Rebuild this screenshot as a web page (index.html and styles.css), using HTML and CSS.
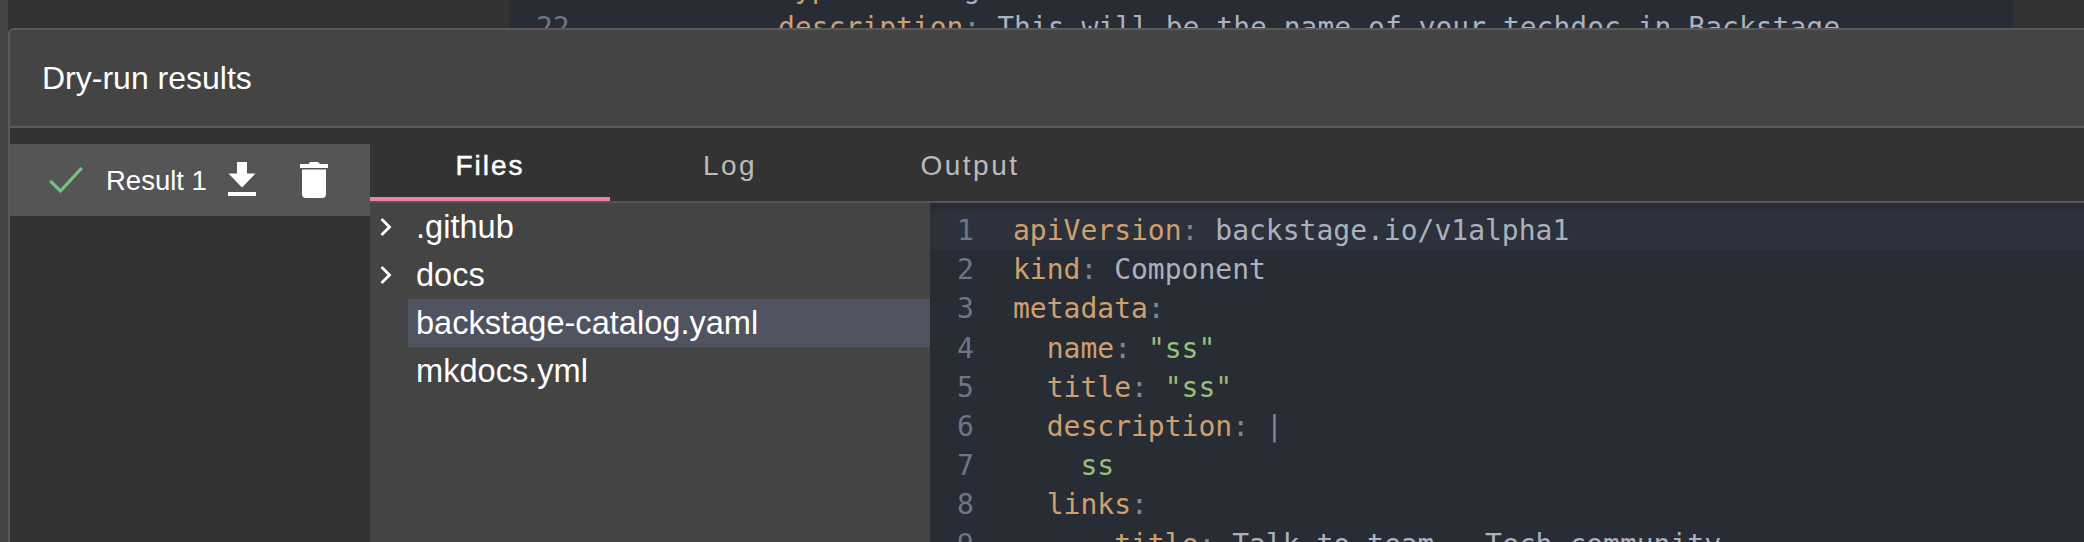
FILE: index.html
```html
<!DOCTYPE html>
<html lang="en">
<head>
<meta charset="utf-8">
<title>Dry-run results</title>
<link rel="stylesheet" href="styles.css">
</head>
<body>
<div class="backdrop">
  <div class="bg-code">
    <div class="cl"><span class="ln bg-ln">21</span><span class="ind8"></span><span class="k">type</span><span class="p">:</span> <span class="v">string</span></div>
    <div class="cl"><span class="ln bg-ln">22</span><span class="ind8"></span><span class="k">description</span><span class="p">:</span> <span class="v">This will be the name of your techdoc in Backstage</span></div>
  </div>
</div>
<section class="dialog">
  <header class="dialog-head"><h2 class="dialog-title">Dry-run results</h2></header>
  <div class="dialog-body">
    <aside class="sidebar">
      <div class="result">
        <svg class="check" viewBox="0 0 34 26" width="34" height="26"><path d="M1.2 13.8 L11.5 24 L32.8 1" fill="none" stroke="#74c282" stroke-width="3.2"/></svg>
        <span class="result-label">Result 1</span>
        <svg class="dl" viewBox="0 0 28 34" width="28" height="34"><path d="M9 0h10v11.5h8.5L14 25.5.5 11.5H9zM0 30h28v4H0z" fill="#fff"/></svg>
        <svg class="trash" viewBox="0 0 28 36" width="28" height="36"><path d="M0 2h8.7l1.3-2h8l2 2h8v4H0zM2 7.5h24V32a4 4 0 0 1-4 4H6a4 4 0 0 1-4-4z" fill="#fff"/></svg>
      </div>
    </aside>
    <div class="main">
      <nav class="tabs">
        <div class="tab active">Files</div>
        <div class="tab">Log</div>
        <div class="tab">Output</div>
      </nav>
      <div class="panes">
        <div class="tree">
          <div class="row"><svg class="chev" viewBox="0 0 12 20" width="12" height="20"><path d="M1.5 2l8 8-8 8" fill="none" stroke="#fff" stroke-width="2.8"/></svg><span class="name">.github</span></div>
          <div class="row"><svg class="chev" viewBox="0 0 12 20" width="12" height="20"><path d="M1.5 2l8 8-8 8" fill="none" stroke="#fff" stroke-width="2.8"/></svg><span class="name">docs</span></div>
          <div class="row file selected"><span class="name">backstage-catalog.yaml</span></div>
          <div class="row file"><span class="name">mkdocs.yml</span></div>
        </div>
        <div class="code">
          <div class="cl active-line"><span class="ln">1</span><span class="k">apiVersion</span><span class="p">:</span> <span class="v">backstage.io/v1alpha1</span></div>
          <div class="cl"><span class="ln">2</span><span class="k">kind</span><span class="p">:</span> <span class="v">Component</span></div>
          <div class="cl"><span class="ln">3</span><span class="k">metadata</span><span class="p">:</span></div>
          <div class="cl"><span class="ln">4</span>  <span class="k">name</span><span class="p">:</span> <span class="s">"ss"</span></div>
          <div class="cl"><span class="ln">5</span>  <span class="k">title</span><span class="p">:</span> <span class="s">"ss"</span></div>
          <div class="cl"><span class="ln">6</span>  <span class="k">description</span><span class="p">:</span> <span class="p">|</span></div>
          <div class="cl"><span class="ln">7</span>    <span class="s">ss</span></div>
          <div class="cl"><span class="ln">8</span>  <span class="k">links</span><span class="p">:</span></div>
          <div class="cl"><span class="ln">9</span>      <span class="k">title</span><span class="p">:</span> <span class="v">Talk to team - Tech community</span></div>
        </div>
      </div>
    </div>
  </div>
</section>
</body>
</html>
```
FILE: styles.css
```css
* { box-sizing: border-box; }
html, body { margin: 0; height: 100%; }
body {
  width: 2084px;
  height: 542px;
  overflow: hidden;
  background: #333;
  border-left: 8px solid #444;
  display: flex;
  flex-direction: column;
  font-family: "Liberation Sans", Arial, sans-serif;
}
.backdrop {
  height: 28px;
  flex: none;
  padding-left: 502px;
  padding-right: 71px;
  overflow: hidden;
}
.bg-code {
  background: #282c34;
  height: 28px;
  overflow: hidden;
}
.bg-code .cl:first-child { margin-top: -31px; }
.cl {
  font-family: "DejaVu Sans Mono", "Liberation Mono", monospace;
  font-size: 28px;
  line-height: 39.2px;
  height: 39.2px;
  white-space: pre;
  color: #abb2bf;
}
.ln {
  display: inline-block;
  width: 62px;
  padding-left: 27px;
  margin-right: 21px;
  color: #6d7686;
  text-align: left;
}
.bg-ln { width: 34px; padding: 0; margin-left: 26px; margin-right: 0; }
.ind8 { display: inline-block; width: 208px; }
.k { color: #cfa06f; }
.p { color: #7f8795; }
.v { color: #abb2bf; }
.s { color: #98bf7a; }
.dialog {
  flex: 1;
  min-height: 0;
  background: #444;
  border-top: 2px solid #5a5a5a;
  border-left: 2px solid #5a5a5a;
  border-top-left-radius: 6px;
  display: flex;
  flex-direction: column;
  overflow: hidden;
}
.dialog-head {
  flex: none;
  height: 96px;
  display: flex;
  align-items: center;
  padding-left: 32px;
}
.dialog-title {
  margin: 0;
  font-size: 32px;
  font-weight: 400;
  color: #fff;
}
.dialog-body {
  flex: 1;
  min-height: 0;
  display: flex;
  border-top: 2px solid #5a5a5a;
  background: #333;
}
.sidebar {
  flex: none;
  width: 360px;
  padding-top: 16px;
}
.result {
  height: 72px;
  background: #555;
  display: flex;
  align-items: center;
  padding-left: 39px;
  color: #fff;
}
.check { flex: none; }
.result-label { margin-left: 23px; padding-top: 1px; font-size: 27.5px; }
.dl { flex: none; margin-left: 21px; margin-top: -2px; }
.trash { flex: none; margin-left: 44px; }
.main { flex: 1; min-width: 0; display: flex; flex-direction: column; }
.tabs {
  flex: none;
  height: 75px;
  display: flex;
  border-bottom: 2px solid #555;
}
.tab {
  width: 240px;
  height: 69px;
  padding-top: 6px;
  display: flex;
  align-items: center;
  justify-content: center;
  font-size: 28px;
  letter-spacing: 2.5px;
  color: #bbb;
}
.tab.active {
  color: #fff;
  letter-spacing: 2px;
  -webkit-text-stroke: 0.5px #fff;
  box-shadow: 0 4px 0 #ec7fa8;
}
.panes { flex: 1; min-height: 0; display: flex; }
.tree { flex: none; width: 560px; background: #444; }
.row {
  height: 48px;
  display: flex;
  align-items: center;
  color: #fff;
  font-size: 32.6px;
  padding-left: 10px;
}
.chev { flex: none; margin-right: 24px; }
.file { margin-left: 38px; padding-left: 8px; }
.selected { background: #4f5460; }
.code {
  flex: 1;
  min-width: 0;
  background: #282c34;
  padding-top: 8px;
  overflow: hidden;
}
.active-line { background: #2c313c; }
```
